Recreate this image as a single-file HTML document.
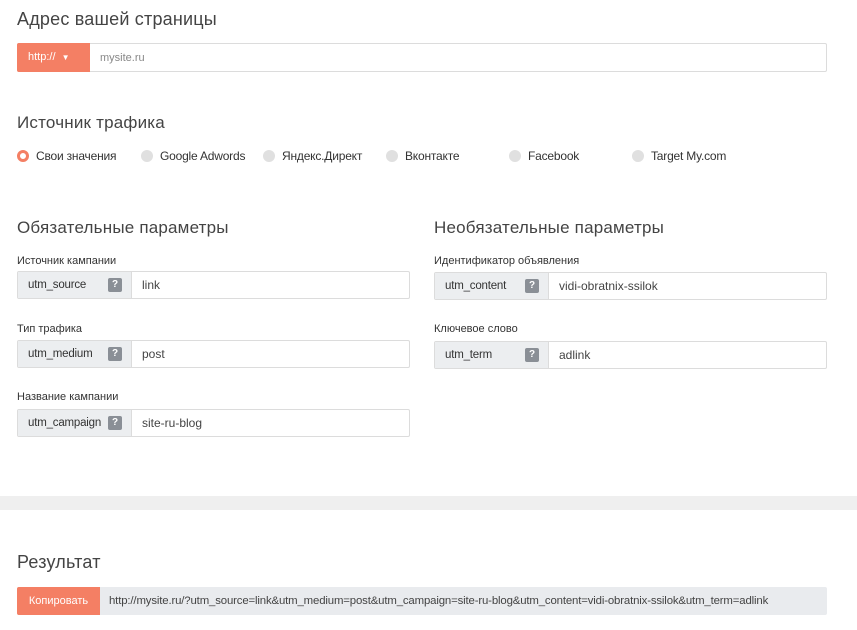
<!DOCTYPE html><html><head><meta charset="utf-8"><style>
body{margin:0;width:857px;height:630px;background:#fff;font-family:"Liberation Sans",sans-serif;color:#333;position:relative;overflow:hidden}
.a{position:absolute}
h2{position:absolute;margin:0;font-weight:300;font-size:18px;color:#444;letter-spacing:.2px}
.inp{position:absolute;height:28px;border:1px solid #dcdcdc;border-radius:2px;background:#fff;box-sizing:border-box}
.lbl{position:absolute;font-size:11px;color:#333}
.pre{position:absolute;left:0;top:0;bottom:0;width:114px;background:#eceef0;border-right:1px solid #dcdcdc;font-size:11.5px;color:#333;line-height:26px;padding-left:10px;box-sizing:border-box;letter-spacing:-.2px}
.q{position:absolute;left:90px;top:6px;width:14px;height:14px;background:#8a8f96;border-radius:2px;color:#fff;font-size:10px;font-weight:bold;text-align:center;line-height:14px}
.val{position:absolute;left:124px;top:0;line-height:26px;font-size:12px;color:#444}
.r{position:absolute;top:150px;font-size:12px;color:#333;line-height:13px;letter-spacing:-.2px}
.r i{display:inline-block;width:12px;height:12px;border-radius:50%;background:#e0e0e0;vertical-align:-2px;margin-right:7px}
</style></head><body>
<h2 style="left:17px;top:9px">Адрес вашей страницы</h2>
<div class="inp" style="left:17px;top:43px;width:810px;height:29px">
<div class="a" style="left:-1px;top:-1px;width:73px;height:29px;background:#f47f64;border-radius:2px 0 0 2px;color:#fff;font-size:11px;line-height:29px;padding-left:11px;box-sizing:border-box">http:// &nbsp;<span style="font-size:8px">▼</span></div>
<div class="a" style="left:82px;top:0;line-height:29px;font-size:11px;color:#888">mysite.ru</div></div>
<h2 style="left:17px;top:113px;font-size:17px">Источник трафика</h2>
<div class="r" style="left:17px"><i style="background:#fff;border:3px solid #f47f64;width:6px;height:6px"></i>Свои значения</div>
<div class="r" style="left:141px"><i></i>Google Adwords</div>
<div class="r" style="left:263px"><i></i>Яндекс.Директ</div>
<div class="r" style="left:386px"><i></i>Вконтакте</div>
<div class="r" style="left:509px"><i></i>Facebook</div>
<div class="r" style="left:632px"><i></i>Target My.com</div>
<h2 style="left:17px;top:218px;font-size:17px">Обязательные параметры</h2>
<h2 style="left:434px;top:218px;font-size:17px">Необязательные параметры</h2>
<div class="lbl" style="left:17px;top:255px">Источник кампании</div>
<div class="inp" style="left:17px;top:271px;width:393px"><div class="pre">utm_source<span class="q">?</span></div><div class="val">link</div></div>
<div class="lbl" style="left:17px;top:323px">Тип трафика</div>
<div class="inp" style="left:17px;top:340px;width:393px"><div class="pre">utm_medium<span class="q">?</span></div><div class="val">post</div></div>
<div class="lbl" style="left:17px;top:391px">Название кампании</div>
<div class="inp" style="left:17px;top:409px;width:393px"><div class="pre">utm_campaign<span class="q">?</span></div><div class="val">site-ru-blog</div></div>
<div class="lbl" style="left:434px;top:255px">Идентификатор объявления</div>
<div class="inp" style="left:434px;top:272px;width:393px"><div class="pre">utm_content<span class="q">?</span></div><div class="val">vidi-obratnix-ssilok</div></div>
<div class="lbl" style="left:434px;top:323px">Ключевое слово</div>
<div class="inp" style="left:434px;top:341px;width:393px"><div class="pre">utm_term<span class="q">?</span></div><div class="val">adlink</div></div>
<div class="a" style="left:0;top:496px;width:857px;height:14px;background:#efefef"></div>
<h2 style="left:17px;top:552px">Результат</h2>
<div class="a" style="left:17px;top:587px;width:810px;height:28px;background:#e9ebee;border-radius:2px">
<div class="a" style="left:0;top:0;width:83px;height:28px;background:#f47f64;border-radius:2px 0 0 2px;color:#fff;font-size:11px;line-height:28px;text-align:center">Копировать</div>
<div class="a" style="left:92px;top:0;line-height:28px;font-size:11.4px;color:#444;white-space:nowrap;letter-spacing:-.15px">http://mysite.ru/?utm_source=link&amp;utm_medium=post&amp;utm_campaign=site-ru-blog&amp;utm_content=vidi-obratnix-ssilok&amp;utm_term=adlink</div></div>
</body></html>
